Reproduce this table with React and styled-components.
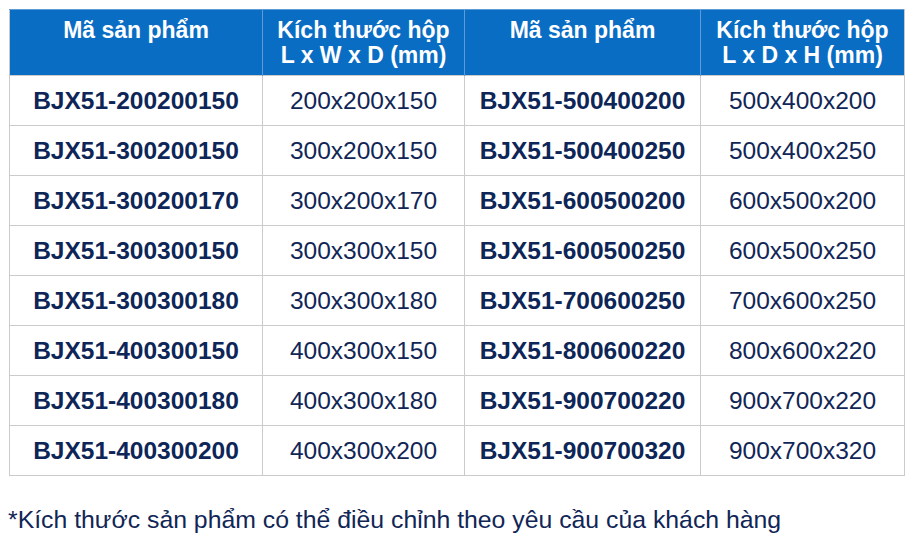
import React from "react";
import styled, { createGlobalStyle } from "styled-components";

const Global = createGlobalStyle`
  html, body { margin: 0; padding: 0; background: #ffffff; }
  body { font-family: "Liberation Sans", Arial, sans-serif; }
`;

const Page = styled.div`
  width: 915px;
  height: 541px;
  padding: 9px 0 0 9px;
  box-sizing: border-box;
  display: flex;
  flex-direction: column;
`;

const Table = styled.table`
  border-collapse: collapse;
  table-layout: fixed;
  width: 895px;
  color: #0f2a5c;
`;

const HeadCell = styled.th`
  background: #0a6dc4;
  color: #ffffff;
  font-weight: 700;
  font-size: 23px;
  line-height: 24.5px;
  height: 66px;
  padding: 8px 2px 0;
  box-sizing: border-box;
  vertical-align: top;
  text-align: center;
  border-top: 1px solid #5f9bd6;
  border-left: 1px solid #5f9bd6;
  border-right: 1px solid #5f9bd6;
  &:first-child { border-left: 1px solid #c8c8c8; }
  &:last-child { border-right: 1px solid #c8c8c8; }
`;

const Cell = styled.td`
  height: 50px;
  padding: 0;
  box-sizing: border-box;
  border: 1px solid #cbcbcb;
  text-align: center;
  vertical-align: middle;
  font-size: 24.5px;
  font-weight: ${(p) => (p.$code ? 700 : 400)};
  color: ${(p) => (p.$code ? "#0d2657" : "#112656")};
`;

const Note = styled.p`
  margin: 29px 0 0 -1px;
  font-size: 24.8px;
  line-height: 29px;
  color: #112656;
  white-space: nowrap;
`;

const rows = [
  ["BJX51-200200150", "200x200x150", "BJX51-500400200", "500x400x200"],
  ["BJX51-300200150", "300x200x150", "BJX51-500400250", "500x400x250"],
  ["BJX51-300200170", "300x200x170", "BJX51-600500200", "600x500x200"],
  ["BJX51-300300150", "300x300x150", "BJX51-600500250", "600x500x250"],
  ["BJX51-300300180", "300x300x180", "BJX51-700600250", "700x600x250"],
  ["BJX51-400300150", "400x300x150", "BJX51-800600220", "800x600x220"],
  ["BJX51-400300180", "400x300x180", "BJX51-900700220", "900x700x220"],
  ["BJX51-400300200", "400x300x200", "BJX51-900700320", "900x700x320"],
];

export default function App() {
  return (
    <>
      <Global />
      <Page>
        <Table>
          <colgroup>
            <col style={{ width: 253 }} />
            <col style={{ width: 202 }} />
            <col style={{ width: 236 }} />
            <col style={{ width: 204 }} />
          </colgroup>
          <thead>
            <tr>
              <HeadCell>Mã sản phẩm</HeadCell>
              <HeadCell>
                Kích thước hộp
                <br />L x W x D (mm)
              </HeadCell>
              <HeadCell>Mã sản phẩm</HeadCell>
              <HeadCell>
                Kích thước hộp
                <br />L x D x H (mm)
              </HeadCell>
            </tr>
          </thead>
          <tbody>
            {rows.map((r) => (
              <tr key={r[0]}>
                <Cell $code>{r[0]}</Cell>
                <Cell>{r[1]}</Cell>
                <Cell $code>{r[2]}</Cell>
                <Cell>{r[3]}</Cell>
              </tr>
            ))}
          </tbody>
        </Table>
        <Note>*Kích thước sản phẩm có thể điều chỉnh theo yêu cầu của khách hàng</Note>
      </Page>
    </>
  );
}
